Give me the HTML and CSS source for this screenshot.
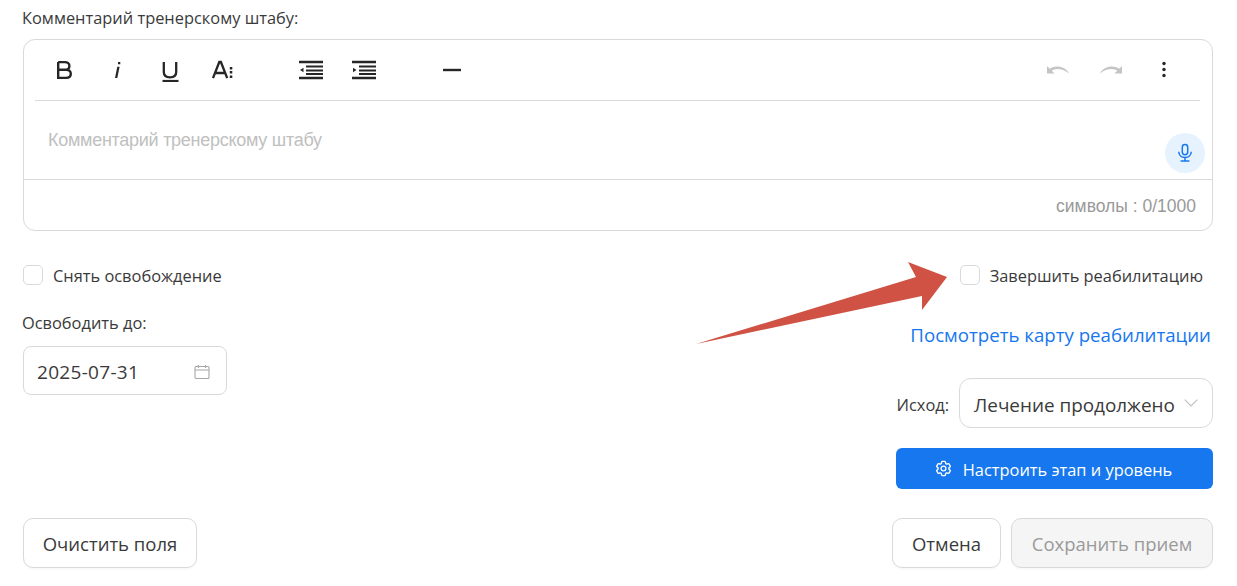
FILE: index.html
```html
<!DOCTYPE html>
<html lang="ru">
<head>
<meta charset="utf-8">
<title>Комментарий</title>
<link rel="stylesheet" href="styles.css">
</head>
<body>
<main class="page">
  <div class="field-label">Комментарий тренерскому штабу:</div>
  <section class="editor">
    <div class="toolbar-wrap">
      <div class="toolbar">
        <div class="tool-group">
          <button class="tool"><svg width="24" height="24" viewBox="0 0 24 24"><path d="M6.200 4.100v15.800h7.800c2.900 0 4.800-1.700 4.800-4.200 0-2.300-1.700-3.900-4.300-3.900h-8.300M6.200 11.800h6.800c2.600 0 4.400-1.500 4.400-3.900s-1.800-3.800-4.400-3.800H6.200" fill="none" stroke="#262626" stroke-width="2.400"/></svg></button>
          <button class="tool"><svg width="24" height="24" viewBox="0 0 24 24"><path d="M13 4h2.300v2.300H13zM12.300 8.800h2.300L12.300 20H10z" fill="#262626"/></svg></button>
          <button class="tool"><svg width="24" height="24" viewBox="0 0 24 24"><path d="M5.800 4v10c0 3.300 2.400 5.300 6.200 5.300s6.200-2 6.200-5.300V4" fill="none" stroke="#262626" stroke-width="2.300"/><path d="M4.500 23h16" stroke="#262626" stroke-width="2.200"/></svg></button>
          <button class="tool"><svg width="24" height="24" viewBox="0 0 24 24"><path d="M2 20.200 8.300 4h1.600l6.300 16.200M4.300 15h9.600" fill="none" stroke="#262626" stroke-width="2.300"/><path d="M18.800 9h2.500v2.500h-2.500zM18.800 13h2.500v2.500h-2.500zM18.800 17.500h2.500V20h-2.500z" fill="#262626"/></svg></button>
        </div>
        <div class="tool-group indent-group">
          <button class="tool"><svg width="24" height="24" viewBox="0 0 24 24"><path d="M0 4h24M0 20h24" stroke="#262626" stroke-width="2.300"/><path d="M7 8.500h17M7 12.500h17M7 16h17" stroke="#262626" stroke-width="1.900"/><path d="M4.500 9.800v4.500L1 12z" fill="#262626"/></svg></button>
          <button class="tool"><svg width="24" height="24" viewBox="0 0 24 24"><path d="M0 4h24M0 20h24" stroke="#262626" stroke-width="2.300"/><path d="M7 8.500h17M7 12.500h17M7 16h17" stroke="#262626" stroke-width="1.900"/><path d="M1 9.800v4.500L4.500 12z" fill="#262626"/></svg></button>
        </div>
        <div class="tool-group rule-group">
          <button class="tool"><svg width="24" height="24" viewBox="0 0 24 24"><path d="M3 12h18" stroke="#262626" stroke-width="2.400"/></svg></button>
        </div>
        <div class="tool-group history-group">
          <button class="tool"><svg width="24" height="24" viewBox="0 0 24 24"><path d="M1 8v7.500h7.500L5.800 12.800C8.500 10.300 15.500 9.500 23.500 15.500 19 8.500 10 6.300 3.800 10.800z" fill="#c4c4c4"/></svg></button>
          <button class="tool"><svg width="24" height="24" viewBox="0 0 24 24"><path d="M23 8v7.500h-7.500l2.700-2.700C15.500 10.300 8.500 9.500.5 15.500 5 8.500 14 6.300 20.200 10.800z" fill="#c4c4c4"/></svg></button>
          <button class="tool"><svg width="24" height="24" viewBox="0 0 24 24"><circle cx="12" cy="5.500" r="1.700" fill="#262626"/><circle cx="12" cy="11.500" r="1.700" fill="#262626"/><circle cx="12" cy="17.500" r="1.700" fill="#262626"/></svg></button>
        </div>
      </div>
    </div>
    <div class="editor-body">
      <div class="placeholder">Комментарий тренерскому штабу</div>
      <button class="mic"><svg width="20" height="20" viewBox="0 0 20 20" fill="none" stroke="#1677ee" stroke-width="1.500"><rect x="7.300" y="1.500" width="5.400" height="10.300" rx="2.700"/><path d="M3.800 8.800c0 3.600 2.700 5.800 6.200 5.800s6.200-2.200 6.200-5.800M10 14.600v3.300M5.600 18h8.800"/></svg></button>
    </div>
    <div class="editor-footer">символы : 0/1000</div>
  </section>

  <div class="columns">
    <div class="col-left">
      <label class="check"><span class="box"></span>Снять освобождение</label>
      <div class="date-label">Освободить до:</div>
      <div class="date-input">
        <span>2025-07-31</span>
        <svg width="16" height="16" viewBox="0 0 16 16" fill="none" stroke="#a6a6a6" stroke-width="1.100"><rect x="1" y="2.500" width="14" height="12" rx="1"/><path d="M1 6h14M4.500 1v3M11.500 1v3"/></svg>
      </div>
    </div>
    <div class="col-right">
      <label class="check check-finish"><span class="box"></span>Завершить реабилитацию</label>
      <a class="link" href="#">Посмотреть карту реабилитации</a>
      <div class="outcome">
        <span class="outcome-label">Исход:</span>
        <div class="select">
          <span class="select-value">Лечение продолжено</span>
          <svg width="16" height="16" viewBox="0 0 14 14" fill="none" stroke="#bfbfbf" stroke-width="1"><path d="M1.500 4 7 9.500 12.500 4"/></svg>
        </div>
      </div>
      <button class="primary"><svg width="19" height="19" viewBox="0 0 24 24" fill="none" stroke="#fff" stroke-width="1.700"><path d="M9.594 3.940c.09-.542.56-.94 1.110-.94h2.593c.55 0 1.020.398 1.110.94l.213 1.281c.063.374.313.686.645.870.074.040.147.083.220.127.325.196.72.257 1.075.124l1.217-.456a1.125 1.125 0 0 1 1.370.490l1.296 2.247a1.125 1.125 0 0 1-.26 1.431l-1.003.827c-.293.241-.438.613-.43.992a7.723 7.723 0 0 1 0 .255c-.008.378.137.75.43.991l1.004.827c.424.35.534.955.26 1.430l-1.298 2.247a1.125 1.125 0 0 1-1.369.491l-1.217-.456c-.355-.133-.75-.072-1.076.124a6.470 6.470 0 0 1-.22.128c-.331.183-.581.495-.644.869l-.213 1.281c-.09.543-.56.94-1.110.94h-2.594c-.55 0-1.019-.398-1.110-.94l-.213-1.281c-.062-.374-.312-.686-.644-.87a6.520 6.520 0 0 1-.22-.127c-.325-.196-.72-.257-1.076-.124l-1.217.456a1.125 1.125 0 0 1-1.369-.49l-1.297-2.247a1.125 1.125 0 0 1 .26-1.431l1.004-.827c.292-.24.437-.613.43-.991a6.932 6.932 0 0 1 0-.255c.007-.38-.138-.751-.43-.992l-1.004-.827a1.125 1.125 0 0 1-.26-1.430l1.297-2.247a1.125 1.125 0 0 1 1.370-.491l1.216.456c.356.133.751.072 1.076-.124.072-.044.146-.086.22-.128.332-.183.582-.495.644-.869l.214-1.280Z"/><circle cx="12" cy="12" r="3"/></svg><span class="primary-text">Настроить этап и уровень</span></button>
    </div>
  </div>

  <div class="actions">
    <button class="btn btn-clear">Очистить поля</button>
    <div class="actions-right">
      <button class="btn btn-cancel">Отмена</button>
      <button class="btn btn-disabled">Сохранить прием</button>
    </div>
  </div>
</main>
<svg class="arrow" width="260" height="90" viewBox="0 0 260 90"><path d="M0 84 220 17 212 2 251 17 226 50 226 36Z" fill="#cf5244"/></svg>
</body>
</html>
```
FILE: styles.css
```css
* { box-sizing: border-box; }
html, body { margin: 0; height: 586px; overflow: hidden; background: #fff; }
body { font-family: "Open Sans", "Noto Sans", sans-serif; color: #3a3a3a; position: relative; }
button { font-family: inherit; }
.page { padding: 8px 24px 0 23px; display: flex; flex-direction: column; }
.field-label { font-size: 16.4px; line-height: 20px; height: 20px; margin-bottom: 11px; color: #3a3a3a; white-space: nowrap; margin-left: -1px; }
.editor { height: 192px; border: 1px solid #d9d9d9; border-radius: 12px; display: flex; flex-direction: column; }
.toolbar-wrap { padding: 0 12px 0 11px; }
.toolbar { height: 61px; border-bottom: 1px solid #d9d9d9; display: flex; align-items: center; padding: 0 0 0 17px; }
.tool-group { display: flex; gap: 29px; }
.indent-group { margin-left: 64px; }
.rule-group { margin-left: 64px; }
.history-group { margin-left: auto; margin-right: 24px; gap: 29px; }
.tool { width: 24px; height: 24px; padding: 0; border: 0; background: none; display: flex; }
.editor-body { height: 79px; position: relative; padding: 29px 24px 0; border-bottom: 1px solid #d9d9d9; }
.placeholder { font-family: "Liberation Sans", Arial, sans-serif; font-size: 18px; line-height: 20px; color: #c0c0c0; letter-spacing: -.27px; }
.mic { position: absolute; right: 7px; top: 32px; width: 40px; height: 40px; border: 0; border-radius: 50%; background: #e6f3ff; display: flex; align-items: center; justify-content: center; padding: 0; }
.editor-footer { flex: 1; font-family: "Liberation Sans", Arial, sans-serif; font-size: 17.5px; color: #999; display: flex; align-items: center; justify-content: flex-end; padding: 2px 16px 0 0; }
.columns { display: flex; justify-content: space-between; margin-top: 32px; height: 259px; }
.check { display: flex; align-items: center; font-size: 16.4px; color: #3a3a3a; height: 24px; white-space: nowrap; }
.box { width: 20px; height: 20px; border: 1px solid #d9d9d9; border-radius: 5px; margin-right: 10px; background: #fff; }
.col-left { display: flex; flex-direction: column; }
.date-label { font-size: 16.4px; line-height: 20px; margin-top: 26px; color: #3a3a3a; white-space: nowrap; margin-left: -1px; }
.date-input { margin-top: 13px; width: 204px; height: 49px; border: 1px solid #d9d9d9; border-radius: 8px; display: flex; align-items: center; justify-content: space-between; padding: 2px 16px 0 13px; font-size: 19px; letter-spacing: .3px; color: #3a3a3a; }
.col-right { width: 317px; display: flex; flex-direction: column; align-items: flex-end; position: relative; }
.check-finish { margin-right: 10px; }
.link { margin-top: 36px; font-size: 18.67px; line-height: 24px; color: #1677ee; text-decoration: none; margin-right: 2px; white-space: nowrap; }
.outcome { margin-top: 31px; display: flex; align-items: center; justify-content: flex-end; gap: 10px; width: 100%; }
.outcome-label { font-size: 16.4px; color: #3a3a3a; white-space: nowrap; padding-top: 2px; }
.select { width: 254px; height: 50px; border: 1px solid #d9d9d9; border-radius: 12px; display: flex; align-items: center; justify-content: space-between; padding: 0 13px 0 14px; font-size: 18.9px; color: #3a3a3a; white-space: nowrap; }
.select-value { padding-top: 3px; }
.primary { margin-top: 20px; width: 317px; height: 41px; border: 0; border-radius: 6px; background: #1677ee; color: #fff; font-size: 16.4px; font-weight: 400; display: flex; align-items: center; justify-content: center; gap: 10px; padding: 0 3px 0 0; white-space: nowrap; }
.primary-text { padding-top: 2px; }
.actions { display: flex; justify-content: space-between; margin-top: -4px; }
.actions-right { display: flex; gap: 10px; }
.btn { height: 50px; border: 1px solid #d9d9d9; border-radius: 10px; background: #fff; font-size: 18.5px; color: #3a3a3a; padding: 0; box-shadow: 0 2px 0 rgba(0,0,0,.02); white-space: nowrap; }
.btn-clear { width: 174px; }
.btn-cancel { width: 109px; }
.btn-disabled { width: 202px; background: #f5f5f5; color: #9a9a9a; }
.arrow { position: absolute; left: 696px; top: 260px; }
```
